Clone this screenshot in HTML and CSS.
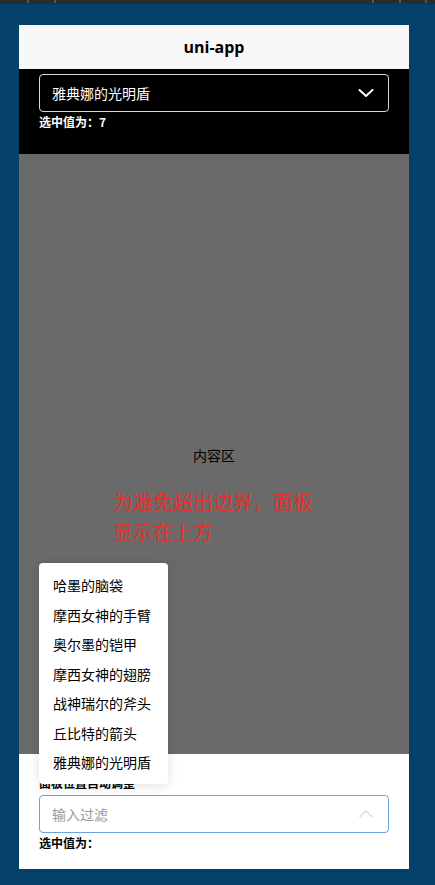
FILE: index.html
```html
<!DOCTYPE html>
<html lang="zh-CN">
<head>
<meta charset="utf-8">
<title>uni-app</title>
<link rel="stylesheet" href="styles.css">
</head>
<body>
<div class="ruler"></div>
<div class="phone">
  <div class="nav">uni-app</div>
  <div class="top-sec">
    <div class="select dark">
      <span class="select-text">雅典娜的光明盾</span>
      <svg class="chev" width="16" height="10" viewBox="0 0 16 10"><path d="M1.5 2 L8 8 L14.5 2" fill="none" stroke="#ffffff" stroke-width="2" stroke-linecap="round" stroke-linejoin="round"/></svg>
    </div>
    <div class="value light">选中值为：7</div>
  </div>
  <div class="content">
    <div class="content-title">内容区</div>
    <div class="warn">为避免超出边界，面板显示在上方</div>
  </div>
  <div class="bottom-sec">
    <div class="value">面板位置自动调整</div>
    <div class="select focus">
      <span class="placeholder">输入过滤</span>
      <svg class="chev" width="16" height="10" viewBox="0 0 16 10"><path d="M2 8 L8 2 L14 8" fill="none" stroke="#dcdfe4" stroke-width="1.6" stroke-linecap="round" stroke-linejoin="round"/></svg>
    </div>
    <div class="value">选中值为：</div>
  </div>
  <div class="panel">
    <div class="item">哈墨的脑袋</div>
    <div class="item">摩西女神的手臂</div>
    <div class="item">奥尔墨的铠甲</div>
    <div class="item">摩西女神的翅膀</div>
    <div class="item">战神瑞尔的斧头</div>
    <div class="item">丘比特的箭头</div>
    <div class="item">雅典娜的光明盾</div>
  </div>
</div>
</body>
</html>
```
FILE: styles.css
```css
html, body {
  margin: 0;
  padding: 0;
}
body {
  background: #03416a;
  width: 435px;
  height: 885px;
  overflow: hidden;
  font-family: "Noto Sans CJK SC", "Noto Sans", sans-serif;
}
.ruler {
  height: 4px;
  background:
    linear-gradient(#555, #555) 27px 0 / 2px 3px no-repeat,
    linear-gradient(#555, #555) 54px 0 / 2px 3px no-repeat,
    linear-gradient(#555, #555) 372px 0 / 2px 3px no-repeat,
    linear-gradient(#555, #555) 399px 0 / 2px 3px no-repeat,
    linear-gradient(#555, #555) 425px 0 / 2px 3px no-repeat,
    #2b2b2b;
}
.phone {
  position: relative;
  margin: 21px 0 0 19px;
  width: 390px;
  height: 844px;
  background: #fff;
}
.nav {
  height: 44px;
  background: #f8f8f8;
  display: flex;
  align-items: center;
  justify-content: center;
  font-family: "Open Sans", "Noto Sans CJK SC", sans-serif;
  font-weight: 700;
  font-size: 16px;
  color: #000;
}
.top-sec {
  height: 85px;
  box-sizing: border-box;
  background: #000;
  padding: 5px 20px 0;
}
.select {
  height: 38px;
  box-sizing: border-box;
  border-radius: 4px;
  display: flex;
  align-items: center;
  justify-content: space-between;
  padding: 0 14px 0 12px;
  font-size: 14px;
}
.select.dark {
  border: 1px solid #d8d8d8;
  color: #fff;
}
.select.focus {
  border: 1px solid #6aa2df;
  background: #fff;
}
.placeholder {
  color: #9a9a9a;
}
.chev {
  display: block;
}
.value {
  font-size: 12px;
  font-weight: 700;
  line-height: 18px;
  height: 18px;
  color: #000;
}
.value.light {
  color: #fff;
  margin-top: 1px;
}
.content {
  height: 600px;
  box-sizing: border-box;
  background: #6a6a6a;
  padding-top: 291px;
}
.content-title {
  text-align: center;
  font-size: 14px;
  line-height: 20px;
  color: #000;
}
.warn {
  margin: 22px 0 0 94px;
  width: 212px;
  font-size: 20px;
  line-height: 30px;
  color: #e3302a;
}
.bottom-sec {
  height: 115px;
  box-sizing: border-box;
  padding: 20px 20px 0;
  background: #fff;
}
.bottom-sec .select {
  margin-top: 3px;
  margin-bottom: 1px;
}
.panel {
  position: absolute;
  left: 20px;
  top: 538px;
  width: 129px;
  box-sizing: border-box;
  padding: 8px 0 6px 14px;
  background: #fff;
  border-radius: 4px;
  box-shadow: 0 2px 12px rgba(0, 0, 0, 0.12);
}
.item {
  font-size: 14px;
  line-height: 29.5px;
  color: #000;
  white-space: nowrap;
}
```
